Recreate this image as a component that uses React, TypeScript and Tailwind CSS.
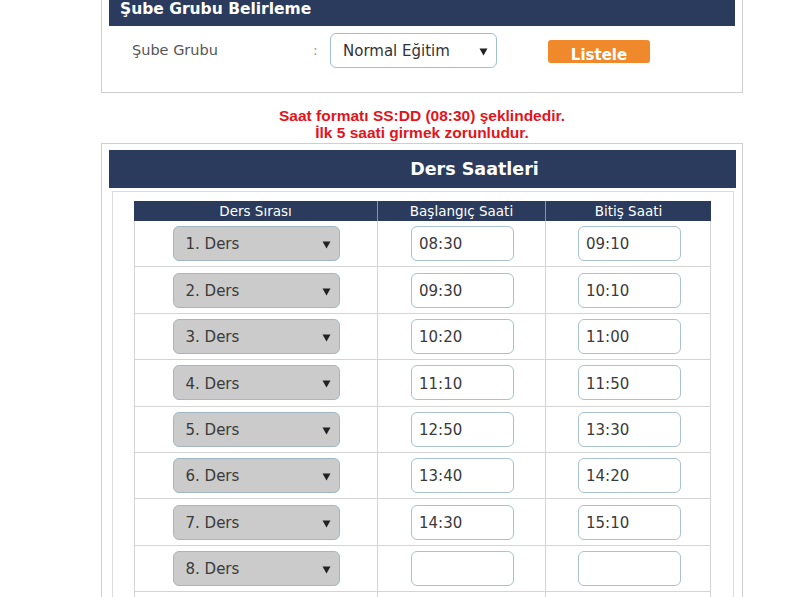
import React from 'react';

const rows = [
  { no: 1, start: '08:30', end: '09:10' },
  { no: 2, start: '09:30', end: '10:10' },
  { no: 3, start: '10:20', end: '11:00' },
  { no: 4, start: '11:10', end: '11:50' },
  { no: 5, start: '12:50', end: '13:30' },
  { no: 6, start: '13:40', end: '14:20' },
  { no: 7, start: '14:30', end: '15:10' },
  { no: 8, start: '', end: '' },
];

const Arrow = () => (
  <svg width="9" height="9" viewBox="0 0 9 9" className="shrink-0">
    <path d="M0.5 1.5h8L4.5 8.5z" fill="#222" />
  </svg>
);

const App: React.FC = () => {
  return (
    <div className="min-h-screen bg-white font-['DejaVu_Sans',sans-serif]">
      <div className="ml-[101px] w-[642px]">
        {/* Şube grubu paneli */}
        <div className="border-x border-b border-[#cfcfcf] px-[7px]">
          <div className="h-[26px] bg-[#2a3b5e] pl-[11px] text-[15.5px] font-bold leading-[18px] text-white">
            Şube Grubu Belirleme
          </div>
          <div className="flex items-center pt-[7px] pb-[24px] pl-[23px]">
            <span className="w-[181px] text-[14.5px] text-[#555]">Şube Grubu</span>
            <span className="w-[17px] text-[14px] text-[#999]">:</span>
            <div className="flex h-[35px] w-[167px] items-center justify-between rounded-[6px] border border-[#9fbfcf] bg-white pl-[12px] pr-[8px] pt-[2px] text-[15px] text-[#333]">
              <span>Normal Eğitim</span>
              <Arrow />
            </div>
            <button className="ml-[51px] mt-[2px] h-[23px] w-[102px] overflow-hidden rounded-[3px] bg-[#f0892b] pt-[6px] text-[15px] font-bold leading-[18px] text-white">
              Listele
            </button>
          </div>
        </div>

        <div className="mt-[14px] text-center font-['Liberation_Sans',sans-serif] text-[15.5px] font-bold leading-[17px] text-[#e3141b]">
          <div>Saat formatı SS:DD (08:30) şeklindedir.</div>
          <div>İlk 5 saati girmek zorunludur.</div>
        </div>

        {/* Ders saatleri paneli */}
        <div className="mt-[2px] border border-[#cfcfcf] pt-[6px] pl-[7px] pr-[6px]">
          <div className="flex h-[38px] items-center justify-center bg-[#2a3b5e] pl-[104px] text-[17.5px] font-bold text-white">
            Ders Saatleri
          </div>
          <div className="mt-[3px] ml-[3px] mr-[2px] border border-[#dcdcdc] pt-[9px] pl-[21px] pr-[21px]">
            <div className="w-[577px]">
              <div className="grid h-[20px] grid-cols-[244px_168px_165px] bg-[#2a3b5e] text-[13.5px] leading-[20px] text-white">
                <div className="border-r border-[#8a93a8] text-center">Ders Sırası</div>
                <div className="border-r border-[#8a93a8] text-center">Başlangıç Saati</div>
                <div className="text-center">Bitiş Saati</div>
              </div>
              <div className="border-x border-[#d4d4d4]">
                {rows.map((r) => (
                  <div
                    key={r.no}
                    className="grid h-[46.4px] grid-cols-[243px_168px_164px] border-b border-[#d4d4d4]"
                  >
                    <div className="flex items-center justify-center border-r border-[#d4d4d4]">
                      <div className="flex h-[35px] w-[167px] items-center justify-between rounded-[6px] border border-[#a3b6c2] bg-[#cbcbcb] pl-[12px] pr-[8px] pt-[2px] text-[15px] text-[#3a3a3a]">
                        <span>{r.no}. Ders</span>
                        <Arrow />
                      </div>
                    </div>
                    <div className="flex items-center border-r border-[#d4d4d4] pl-[33px]">
                      <div className="flex h-[35px] w-[103px] items-center rounded-[6px] border border-[#a9c2cd] bg-white pl-[7px] pt-[2px] text-[15px] text-[#3a3a3a]">
                        {r.start}
                      </div>
                    </div>
                    <div className="flex items-center pl-[32px]">
                      <div className="flex h-[35px] w-[103px] items-center rounded-[6px] border border-[#a9c2cd] bg-white pl-[7px] pt-[2px] text-[15px] text-[#3a3a3a]">
                        {r.end}
                      </div>
                    </div>
                  </div>
                ))}
                {/* alt kenarda kesilen satır */}
                <div className="grid h-[46.4px] grid-cols-[243px_168px_164px]">
                  <div className="flex items-center justify-center border-r border-[#d4d4d4]">
                    <div className="h-[35px] w-[167px] rounded-[6px] border border-[#7fb6dc] bg-white" />
                  </div>
                  <div className="border-r border-[#d4d4d4]" />
                  <div />
                </div>
              </div>
            </div>
            <div className="h-[20px]" />
          </div>
          <div className="h-[8px]" />
        </div>
      </div>
    </div>
  );
};

export default App;
